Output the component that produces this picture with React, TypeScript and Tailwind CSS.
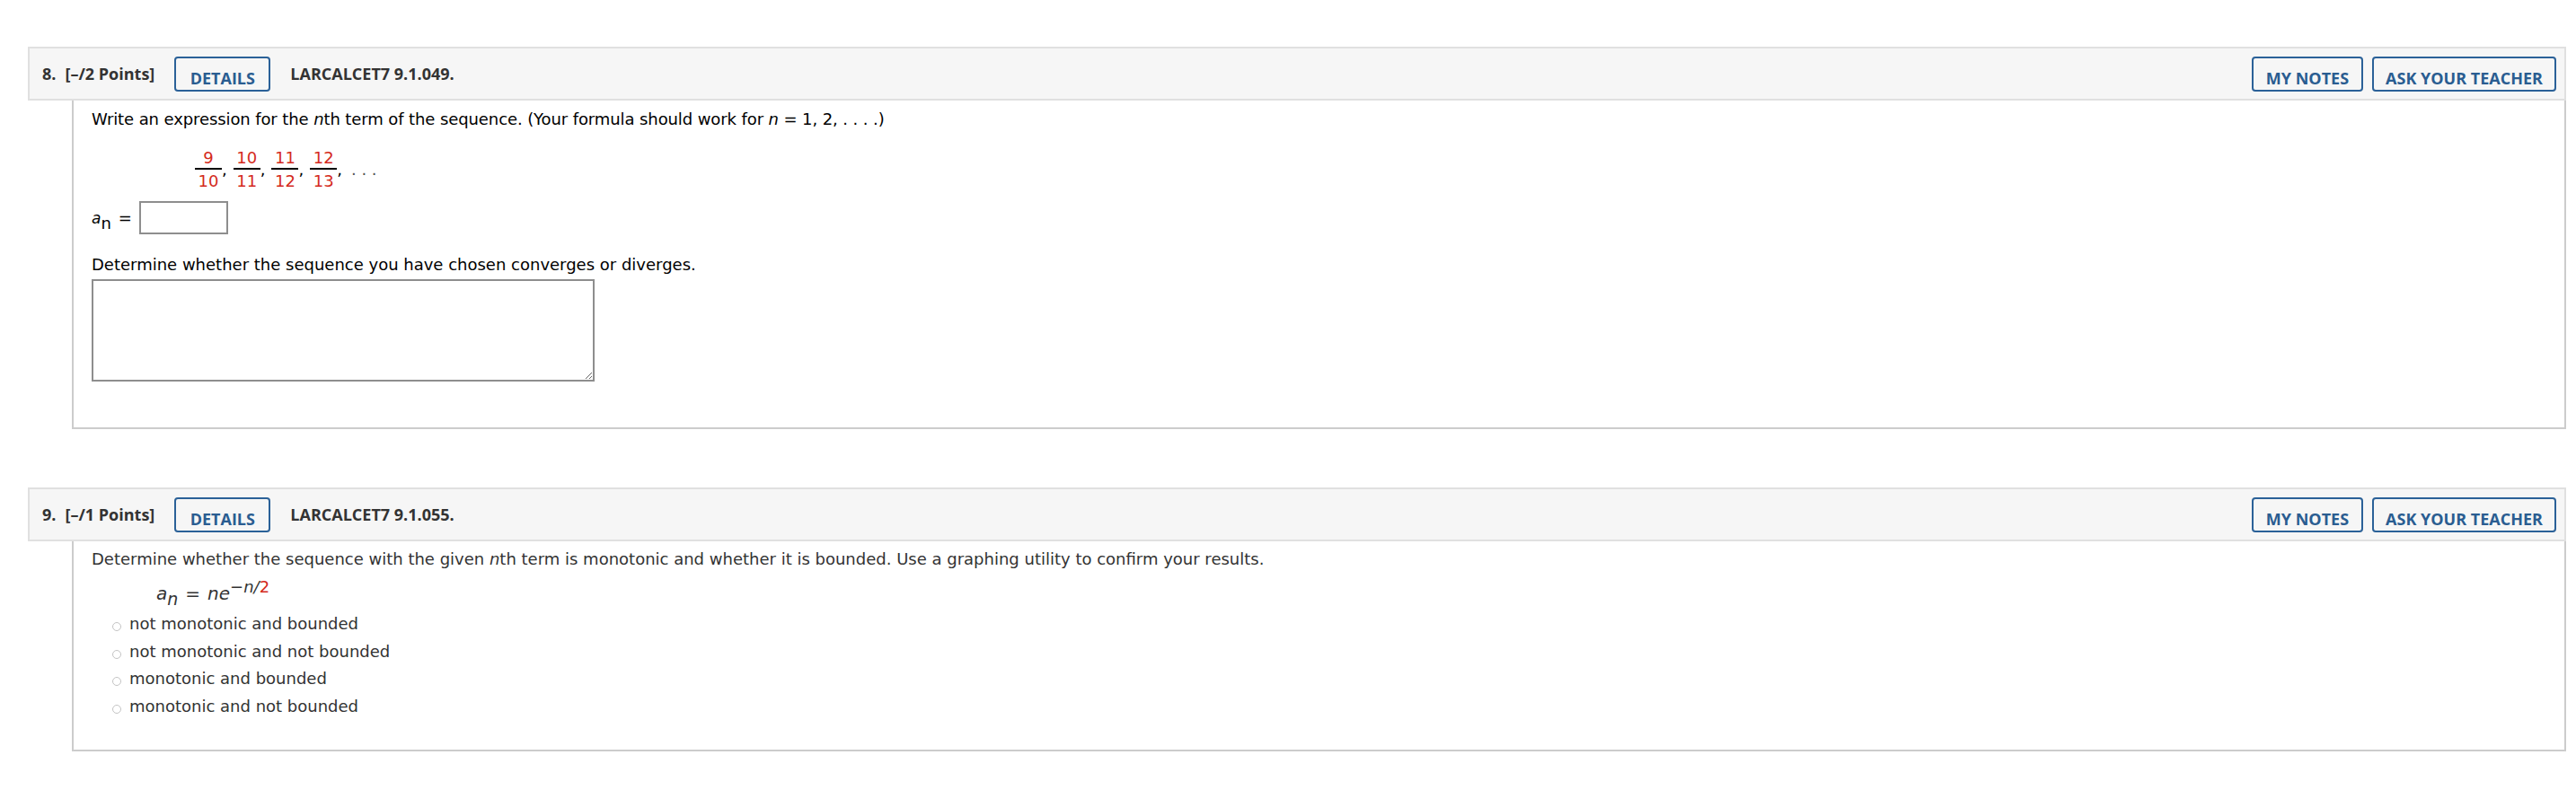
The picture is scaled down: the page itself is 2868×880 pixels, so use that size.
import React from "react";

function Btn({ children, w }: { children: React.ReactNode; w: string }) {
  return (
    <div
      className={`${w} h-[39px] border-2 border-[#2b6198] rounded-[4px] flex items-end justify-center pb-[1px] leading-[24px] text-[#2a5d91] font-bold text-[18px] whitespace-nowrap`}
    >
      {children}
    </div>
  );
}

function Header({ num, points, code }: { num: string; points: string; code: string }) {
  return (
    <div className="h-[60px] border-2 border-[#e0e0e0] bg-[#f6f6f6] flex items-center pl-[14px] pr-[9px] font-['Open_Sans','Liberation_Sans',sans-serif] text-[18px] text-[#333333]">
      <span className="font-bold">{num}.</span>
      <span className="font-bold ml-[10px]">[–/{points} Points]</span>
      <div className="ml-[22px]">
        <Btn w="w-[107px]">DETAILS</Btn>
      </div>
      <span className="font-bold ml-[22px]">{code}</span>
      <div className="ml-auto flex gap-[10px]">
        <Btn w="w-[124px]">MY NOTES</Btn>
        <Btn w="w-[205px]">ASK YOUR TEACHER</Btn>
      </div>
    </div>
  );
}

function Frac({ n, d }: { n: string; d: string }) {
  return (
    <span className="inline-flex flex-col items-center text-[#d42a20] leading-[20px]">
      <span>{n}</span>
      <span className="w-[30px] h-[2px] bg-black mt-[1px] mb-[3px]" />
      <span>{d}</span>
    </span>
  );
}

function Comma() {
  return <span className="mr-[7px] leading-[20px]">,</span>;
}

function Radio({ label }: { label: string }) {
  return (
    <div className="flex items-center leading-[30.5px] h-[30.5px]">
      <span className="ml-[23px] mt-[6px] w-[10px] h-[10px] rounded-full border border-[#c4c4c4] bg-white shrink-0" />
      <span className="ml-[9px]">{label}</span>
    </div>
  );
}

export default function App() {
  return (
    <div className="w-full min-h-[880px] bg-white pt-[52px] pl-[31px] pr-[11px]">
      {/* Question 8 */}
      <Header num="8" points="2" code="LARCALCET7 9.1.049." />
      <div className="ml-[49px] h-[366px] border-2 border-t-0 border-[#cccccc] pl-[20px] pt-[10px] font-['DejaVu_Sans','Verdana',sans-serif] text-[18px] text-black">
        <p className="leading-[22px] tracking-[-0.1px]">
          Write an expression for the <i>n</i>th term of the sequence. (Your formula should work for <i>n</i> = 1, 2, . . . .)
        </p>
        <div className="flex items-center ml-[115px] mt-[22px]">
          <Frac n="9" d="10" />
          <Comma />
          <Frac n="10" d="11" />
          <Comma />
          <Frac n="11" d="12" />
          <Comma />
          <Frac n="12" d="13" />
          <span className="leading-[20px]">,</span>
          <span className="ml-[10px] leading-[20px] text-[#555555]">. . .</span>
        </div>
        <div className="flex items-center mt-[12px]">
          <span className="leading-[22px]">
            <i className="text-[17px]">a</i>
            <span className="align-[-6px] leading-[0]">n</span>
          </span>
          <span className="ml-[8px] leading-[22px]">=</span>
          <input
            type="text"
            className="ml-[8px] w-[99px] h-[37px] border-2 border-[#8e8e8e] bg-white outline-none"
          />
        </div>
        <p className="leading-[22px] mt-[23px]">
          Determine whether the sequence you have chosen converges or diverges.
        </p>
        <textarea className="block mt-[5px] w-[560px] h-[114px] border-2 border-[#8e8e8e] bg-white outline-none" />
      </div>

      {/* Question 9 */}
      <div className="mt-[65px]">
        <Header num="9" points="1" code="LARCALCET7 9.1.055." />
        <div className="ml-[49px] h-[234px] border-2 border-t-0 border-[#cccccc] pl-[20px] pt-[9px] font-['DejaVu_Sans','Verdana',sans-serif] text-[18px] text-[#333333]">
          <p className="leading-[22px]">
            Determine whether the sequence with the given <i>n</i>th term is monotonic and whether it is bounded. Use a graphing utility to confirm your results.
          </p>
          <div className="ml-[72px] mt-[12px] leading-[30px] text-[20px]">
            <i>a</i>
            <i className="align-[-6px] leading-[0] text-[19px]">n</i>
            <span className="ml-[8px]">=</span>
            <i className="ml-[8px]">ne</i>
            <span className="align-[8px] leading-[0] text-[18px]">
              <i>−n/</i>
              <span className="text-[#d42a20]">2</span>
            </span>
          </div>
          <div className="mt-[4px]">
            <Radio label="not monotonic and bounded" />
            <Radio label="not monotonic and not bounded" />
            <Radio label="monotonic and bounded" />
            <Radio label="monotonic and not bounded" />
          </div>
        </div>
      </div>
    </div>
  );
}
